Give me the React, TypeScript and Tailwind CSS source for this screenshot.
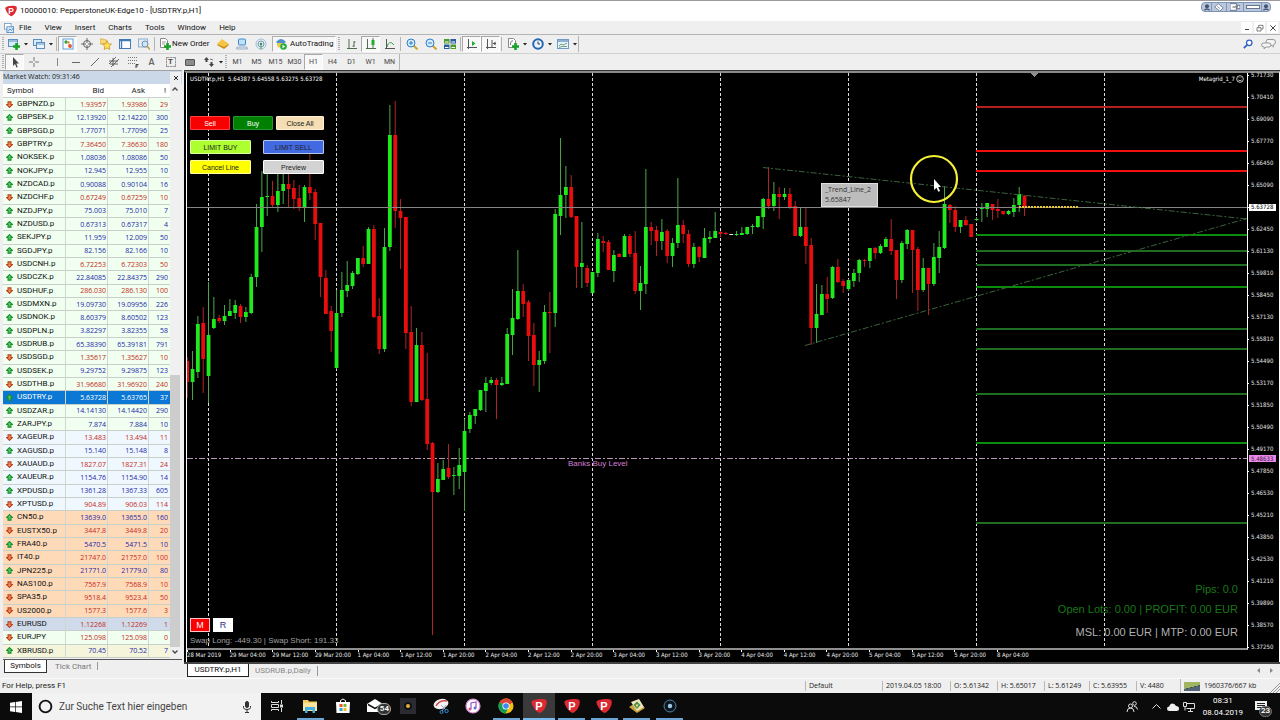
import React from 'react';

type Dir = 'up' | 'down';
type Quote = [symbol: string, dir: Dir, bid: string, ask: string, spread: string, tone: string];

const GREEN_ROW = 'bg-[#f0fff0]';
const BLUE_ROW = 'bg-[#f0f8ff]';
const PEACH_ROW = 'bg-[#ffdab9]';

const quotes: Quote[] = [
  ['GBPNZD.p', 'down', '1.93957', '1.93986', '29', GREEN_ROW],
  ['GBPSEK.p', 'up', '12.13920', '12.14220', '300', GREEN_ROW],
  ['GBPSGD.p', 'up', '1.77071', '1.77096', '25', GREEN_ROW],
  ['GBPTRY.p', 'down', '7.36450', '7.36630', '180', GREEN_ROW],
  ['NOKSEK.p', 'up', '1.08036', '1.08086', '50', GREEN_ROW],
  ['NOKJPY.p', 'up', '12.945', '12.955', '10', GREEN_ROW],
  ['NZDCAD.p', 'up', '0.90088', '0.90104', '16', GREEN_ROW],
  ['NZDCHF.p', 'down', '0.67249', '0.67259', '10', GREEN_ROW],
  ['NZDJPY.p', 'up', '75.003', '75.010', '7', GREEN_ROW],
  ['NZDUSD.p', 'up', '0.67313', '0.67317', '4', GREEN_ROW],
  ['SEKJPY.p', 'up', '11.959', '12.009', '50', GREEN_ROW],
  ['SGDJPY.p', 'up', '82.156', '82.166', '10', GREEN_ROW],
  ['USDCNH.p', 'down', '6.72253', '6.72303', '50', GREEN_ROW],
  ['USDCZK.p', 'up', '22.84085', '22.84375', '290', GREEN_ROW],
  ['USDHUF.p', 'down', '286.030', '286.130', '100', GREEN_ROW],
  ['USDMXN.p', 'up', '19.09730', '19.09956', '226', GREEN_ROW],
  ['USDNOK.p', 'up', '8.60379', '8.60502', '123', GREEN_ROW],
  ['USDPLN.p', 'up', '3.82297', '3.82355', '58', GREEN_ROW],
  ['USDRUB.p', 'up', '65.38390', '65.39181', '791', GREEN_ROW],
  ['USDSGD.p', 'down', '1.35617', '1.35627', '10', GREEN_ROW],
  ['USDSEK.p', 'up', '9.29752', '9.29875', '123', GREEN_ROW],
  ['USDTHB.p', 'down', '31.96680', '31.96920', '240', GREEN_ROW],
  ['USDTRY.p', 'up', '5.63728', '5.63765', '37', 'bg-[#0a78d4]'],
  ['USDZAR.p', 'up', '14.14130', '14.14420', '290', GREEN_ROW],
  ['ZARJPY.p', 'up', '7.874', '7.884', '10', GREEN_ROW],
  ['XAGEUR.p', 'down', '13.483', '13.494', '11', BLUE_ROW],
  ['XAGUSD.p', 'up', '15.140', '15.148', '8', BLUE_ROW],
  ['XAUAUD.p', 'down', '1827.07', '1827.31', '24', BLUE_ROW],
  ['XAUEUR.p', 'up', '1154.76', '1154.90', '14', BLUE_ROW],
  ['XPDUSD.p', 'up', '1361.28', '1367.33', '605', BLUE_ROW],
  ['XPTUSD.p', 'down', '904.89', '906.03', '114', BLUE_ROW],
  ['CN50.p', 'up', '13639.0', '13655.0', '160', PEACH_ROW],
  ['EUSTX50.p', 'down', '3447.8', '3449.8', '20', PEACH_ROW],
  ['FRA40.p', 'up', '5470.5', '5471.5', '10', PEACH_ROW],
  ['IT40.p', 'down', '21747.0', '21757.0', '100', PEACH_ROW],
  ['JPN225.p', 'up', '21771.0', '21779.0', '80', PEACH_ROW],
  ['NAS100.p', 'down', '7567.9', '7568.9', '10', PEACH_ROW],
  ['SPA35.p', 'down', '9518.4', '9523.4', '50', PEACH_ROW],
  ['US2000.p', 'down', '1577.3', '1577.6', '3', PEACH_ROW],
  ['EURUSD', 'down', '1.12268', '1.12269', '1', 'bg-[#cfdbea]'],
  ['EURJPY', 'down', '125.098', '125.098', '0', GREEN_ROW],
  ['XBRUSD.p', 'up', '70.45', '70.52', '7', 'bg-[#f5f5dc]'],
];

// One entry per hour: high, body top, body bottom, low, colour (g = up, r = down, w = flat)
type Candle = [number, number, number, number, string];
const candles: Candle[] = [
  [357, 361, 382, 398, 'r'], [351, 369, 382, 400, 'g'], [316, 324, 372, 378, 'g'], [307, 323, 359, 393, 'r'],
  [282, 335, 376, 403, 'g'], [297, 319, 328, 329, 'g'], [315, 318, 321, 323, 'r'], [305, 316, 321, 325, 'g'],
  [299, 311, 316, 316, 'g'], [300, 305, 313, 319, 'g'], [304, 306, 317, 323, 'r'], [307, 312, 317, 322, 'g'],
  [274, 277, 313, 314, 'g'], [204, 227, 277, 287, 'g'], [171, 197, 227, 252, 'g'], [174, 196, 197, 216, 'g'],
  [181, 196, 205, 207, 'r'], [173, 191, 205, 212, 'g'], [173, 184, 191, 204, 'g'], [173, 184, 189, 207, 'r'],
  [180, 188, 199, 209, 'r'], [185, 198, 208, 211, 'r'], [185, 187, 208, 222, 'g'], [153, 187, 193, 200, 'r'],
  [189, 192, 224, 240, 'r'], [223, 223, 277, 297, 'r'], [270, 278, 314, 314, 'r'], [306, 311, 331, 352, 'r'],
  [290, 313, 368, 369, 'g'], [272, 290, 313, 317, 'g'], [261, 285, 291, 297, 'g'], [271, 273, 286, 289, 'g'],
  [258, 258, 274, 275, 'g'], [246, 258, 264, 267, 'r'], [227, 229, 264, 264, 'g'], [225, 229, 317, 318, 'r'],
  [298, 316, 349, 354, 'r'], [228, 247, 349, 352, 'g'], [105, 135, 247, 251, 'g'], [101, 135, 211, 228, 'r'],
  [199, 211, 218, 269, 'r'], [217, 217, 333, 349, 'r'], [306, 332, 402, 406, 'r'], [328, 345, 402, 402, 'g'],
  [332, 345, 400, 401, 'r'], [353, 399, 444, 450, 'r'], [442, 443, 492, 635, 'r'], [463, 479, 492, 493, 'g'],
  [460, 469, 480, 480, 'g'], [444, 468, 477, 479, 'r'], [467, 475, 476, 495, 'g'], [448, 465, 476, 489, 'g'],
  [419, 431, 472, 511, 'g'], [412, 415, 429, 433, 'g'], [409, 409, 416, 424, 'g'], [390, 390, 410, 411, 'g'],
  [377, 383, 391, 412, 'g'], [377, 380, 383, 385, 'g'], [378, 380, 385, 419, 'r'], [377, 383, 385, 386, 'g'],
  [328, 334, 384, 384, 'g'], [289, 318, 335, 355, 'g'], [250, 291, 319, 320, 'g'], [284, 291, 304, 317, 'r'],
  [300, 302, 336, 361, 'r'], [323, 335, 365, 386, 'r'], [351, 360, 365, 392, 'g'], [305, 312, 361, 364, 'g'],
  [292, 312, 313, 353, 'r'], [209, 214, 313, 327, 'g'], [138, 195, 216, 235, 'g'], [166, 187, 195, 218, 'g'],
  [175, 187, 217, 218, 'r'], [216, 216, 267, 288, 'r'], [222, 263, 267, 288, 'g'], [265, 268, 283, 287, 'r'],
  [272, 272, 293, 293, 'g'], [233, 239, 273, 277, 'g'], [236, 241, 243, 252, 'r'], [240, 242, 270, 270, 'r'],
  [250, 255, 271, 282, 'g'], [253, 254, 257, 257, 'r'], [234, 236, 257, 257, 'g'], [234, 236, 254, 257, 'r'],
  [231, 253, 291, 294, 'r'], [266, 283, 291, 310, 'g'], [169, 227, 284, 294, 'g'], [222, 227, 231, 245, 'r'],
  [226, 230, 241, 256, 'r'], [219, 232, 241, 250, 'g'], [229, 231, 256, 263, 'r'], [238, 243, 256, 267, 'g'],
  [178, 225, 243, 248, 'g'], [220, 225, 234, 243, 'r'], [230, 234, 264, 267, 'r'], [243, 247, 264, 268, 'g'],
  [246, 247, 257, 262, 'r'], [228, 238, 258, 258, 'g'], [231, 237, 239, 243, 'g'], [212, 231, 238, 238, 'g'],
  [231, 232, 234, 237, 'r'], [232, 233, 234, 235, 'r'], [234, 234, 235, 235, 'w'], [231, 234, 235, 236, 'g'],
  [227, 233, 235, 235, 'g'], [227, 227, 234, 235, 'g'], [224, 226, 227, 234, 'g'], [216, 216, 227, 228, 'g'],
  [198, 199, 217, 229, 'g'], [167, 199, 206, 209, 'r'], [182, 194, 206, 211, 'g'], [187, 194, 197, 219, 'r'],
  [188, 194, 197, 200, 'g'], [188, 194, 207, 209, 'r'], [201, 206, 236, 236, 'r'], [207, 227, 236, 237, 'g'],
  [207, 227, 246, 264, 'r'], [238, 245, 328, 345, 'r'], [284, 314, 328, 343, 'g'], [285, 294, 315, 315, 'g'],
  [277, 294, 299, 313, 'r'], [266, 267, 298, 299, 'g'], [259, 267, 282, 283, 'r'], [279, 281, 286, 293, 'r'],
  [279, 280, 289, 291, 'g'], [269, 273, 281, 287, 'g'], [259, 260, 273, 282, 'g'], [259, 260, 261, 267, 'r'],
  [248, 248, 261, 268, 'g'], [247, 248, 253, 259, 'r'], [244, 246, 253, 254, 'g'], [237, 239, 247, 247, 'g'],
  [219, 239, 251, 255, 'r'], [250, 250, 280, 299, 'r'], [241, 243, 280, 283, 'g'], [229, 230, 244, 249, 'g'],
  [230, 230, 250, 293, 'r'], [247, 249, 290, 311, 'r'], [258, 268, 290, 292, 'g'], [268, 268, 284, 315, 'r'],
  [243, 257, 284, 286, 'g'], [231, 247, 258, 273, 'g'], [186, 204, 248, 249, 'g'], [204, 205, 210, 223, 'r'],
  [206, 210, 227, 232, 'r'], [220, 220, 227, 233, 'g'], [216, 220, 225, 226, 'r'], [224, 224, 237, 237, 'r'],
  [217, 219, 220, 221, 'g'], [203, 208, 209, 222, 'g'], [203, 203, 209, 217, 'g'], [204, 204, 210, 220, 'r'],
  [199, 209, 211, 218, 'r'], [211, 211, 214, 215, 'r'], [210, 211, 214, 215, 'g'], [198, 205, 212, 217, 'g'],
  [187, 194, 205, 212, 'g'], [195, 196, 207, 216, 'r'],
];

const bodyFill: Record<string, string> = { g: '#1eea1e', r: '#ea0d0d', w: '#e8e8e8' };
const wickFill: Record<string, string> = { g: '#4aa84a', r: '#b02626', w: '#e8e8e8' };

const LEFT = 187;
const STEP = 16 / 3;
const daySeparators = [208, 336, 464, 592, 720, 848, 976, 1104];
const stops: [number, string][] = [[107, '#b41e1e'], [151, '#f01010'], [171, '#f01010']];
const targets: [number, string][] = [
  [235, '#0c8c0c'], [251, '#1f6e1f'], [265, '#1f6e1f'], [287, '#0c8c0c'], [329, '#1f6e1f'],
  [349, '#1f6e1f'], [394, '#1f6e1f'], [443, '#0c8c0c'], [523, '#1f6e1f'],
];

const prices = [
  '5.71730', '5.70410', '5.69090', '5.67770', '5.66450', '5.65090', '5.63728', '5.62450', '5.61130',
  '5.59810', '5.58450', '5.57130', '5.55810', '5.54490', '5.53170', '5.51850', '5.50490', '5.49170',
  '5.47850', '5.46530', '5.45210', '5.43850', '5.42530', '5.41210', '5.39890', '5.38570', '5.37250',
];

const times = [
  '28 Mar 2019', '29 Mar 04:00', '29 Mar 12:00', '29 Mar 20:00', '1 Apr 04:00', '1 Apr 12:00', '1 Apr 20:00',
  '2 Apr 04:00', '2 Apr 12:00', '2 Apr 20:00', '3 Apr 04:00', '3 Apr 12:00', '3 Apr 20:00', '4 Apr 04:00',
  '4 Apr 12:00', '4 Apr 20:00', '5 Apr 04:00', '5 Apr 12:00', '5 Apr 20:00', '8 Apr 04:00',
];

/* ---------- small building blocks ---------- */

const Icon: React.FC<{ children: React.ReactNode; className?: string }> = ({ children, className }) => (
  <svg viewBox="0 0 12 12" className={className ?? 'size-3 shrink-0'} fill="none">
    {children}
  </svg>
);

const Tool: React.FC<{ label: string; on?: boolean; children: React.ReactNode }> = ({ label, on, children }) => (
  <button
    aria-label={label}
    className={
      on
        ? 'flex h-4 w-[19px] shrink-0 items-center justify-center border border-[#a8a8a8] border-r-white border-b-white bg-[#f8f8f8]'
        : 'flex h-4 w-[19px] shrink-0 items-center justify-center'
    }
  >
    {children}
  </button>
);

const Caret: React.FC<{ wide?: boolean }> = ({ wide }) => (
  <button aria-label="More" className={wide ? 'flex w-2 shrink-0 justify-center' : 'flex w-1.5 shrink-0 justify-center'}>
    <svg viewBox="0 0 4 3" className="h-[3px] w-1">
      <path d="M0 0h4L2 2.5z" fill="#222" />
    </svg>
  </button>
);

const Sep = () => <span className="mr-px ml-px h-[14px] w-px shrink-0 bg-[#b4b4b4]" />;

const Grip: React.FC<{ className: string }> = ({ className }) => (
  <span className={`${className} flex shrink-0 justify-center`}>
    <span className="h-[14px] w-[2px] bg-[repeating-linear-gradient(#b0b0b0_0_1px,#efefef_1px_2px)]" />
  </span>
);

const Pepper: React.FC<{ className: string }> = ({ className }) => (
  <svg viewBox="0 0 16 16" className={className}>
    <path d="M.6 3.600C1.600.900 13.500 0 15.200 2c1.600 2-.200 9.300-5.800 12.800C6.500 16.500-.400 6.800.600 3.600z" fill="#dc2a33" />
    <text x="8" y="11.500" textAnchor="middle" fontSize="11" fontWeight="bold" fill="#fff" fontFamily="Liberation Sans, sans-serif">
      P
    </text>
  </svg>
);

const Plus = () => <path d="M8.500 5v7M5 8.500h7" stroke="#17a325" strokeWidth="2.600" />;

/* ---------- window chrome ---------- */

const TitleBar = () => (
  <header className="flex h-[21px] items-center border-t border-[#9a9a9a] bg-white pr-[9px] pl-[5px]">
    <Pepper className="size-3" />
    <h1 className="ml-[3px] flex-1 text-[8px] text-[#111]">10000010: PepperstoneUK-Edge10 - [USDTRY.p,H1]</h1>
    <div className="mt-px flex h-2.5 self-start overflow-hidden rounded-sm border border-[#7d93b4] bg-[#b9c8de]">
      <button aria-label="Pin" className="flex w-2.5 items-center justify-center border-r border-[#8397b5]">
        <Icon className="size-2"><circle cx="6" cy="5" r="3" fill="#44556f" /><path d="M2 11q4-4 8 0" stroke="#44556f" strokeWidth="2" /></Icon>
      </button>
      <button aria-label="Rotate" className="flex w-[15px] items-center justify-center border-r border-[#8397b5]">
        <Icon className="size-2.5"><path d="M1 6l4-4 6 5-4 4z" fill="#fff" stroke="#66758c" /><path d="M4 5l3 3" stroke="#66758c" /></Icon>
      </button>
      <button aria-label="Move" className="flex w-[17px] items-center justify-center border-r border-[#8397b5]">
        <Icon className="size-2.5"><path d="M0 2h8v2h4v4H8v2H0z" fill="#fff" stroke="#55647a" /><path d="M3 6h6M7 4l2 2-2 2" stroke="#334" /></Icon>
      </button>
      <button aria-label="Resize" className="flex w-[18px] items-center justify-center border-r border-[#8397b5]">
        <span className="h-1 w-3.5 border border-[#66758c] bg-white" />
      </button>
      <button aria-label="Close overlay" className="flex w-2 items-center justify-center">
        <Icon className="size-2"><circle cx="6" cy="5" r="3" fill="#44556f" /><path d="M2 11q4-4 8 0" stroke="#44556f" strokeWidth="2" /></Icon>
      </button>
    </div>
  </header>
);

const MenuBar = () => (
  <nav className="flex h-[14px] items-center border-b border-[#b4b4b4] bg-[#efefef] pl-1 text-[8px] text-[#111]">
    <Icon className="mr-1 size-2.5 shrink-0">
      <rect x=".500" y=".500" width="8" height="7" fill="#fff" stroke="#6f9cc9" />
      <rect x="3.500" y="4.500" width="8" height="7" fill="#dcebf8" stroke="#4c86bf" />
      <path d="M5 10l2-3 2 2 2-3" stroke="#4c86bf" />
    </Icon>
    <div className="flex flex-1 gap-[13px] pl-px">
      {['File', 'View', 'Insert', 'Charts', 'Tools', 'Window', 'Help'].map((item) => (
        <button key={item}>{item}</button>
      ))}
    </div>
    <div className="flex gap-0.5 pr-0.5">
      <button aria-label="Minimize" className="flex h-[11px] w-[11px] items-center justify-center bg-white">
        <span className="mt-1 h-px w-1 bg-[#444]" />
      </button>
      <button aria-label="Restore" className="flex h-[11px] w-[11px] items-center justify-center bg-white">
        <Icon className="size-2"><path d="M1.500 5.500h6v5h-6zM4 5V2h6.500v5.500H8" stroke="#444" /></Icon>
      </button>
      <button aria-label="Close" className="flex h-[11px] w-[11px] items-center justify-center bg-white">
        <Icon className="size-2"><path d="M2 2l8 8M10 2l-8 8" stroke="#444" strokeWidth="1.500" /></Icon>
      </button>
    </div>
  </nav>
);

const MainToolbar = () => (
  <div className="flex h-[18px] items-center bg-[#efefef]">
    <Grip className="w-[5px]" />
    <button aria-label="New chart" className="flex w-[17px] shrink-0 justify-center">
      <Icon><rect x=".500" y="1.500" width="9" height="7" fill="#d7ebfa" stroke="#5a8fc0" /><path d="M1 3h8" stroke="#5a8fc0" /><Plus /></Icon>
    </button>
    <Caret wide />
    <button aria-label="Profiles" className="flex w-[17px] shrink-0 justify-center">
      <Icon><rect x=".500" y="1.500" width="8" height="6" fill="#d7ebfa" stroke="#5a8fc0" /><rect x="3.500" y="4.500" width="8" height="6" fill="#eaf4fc" stroke="#5a8fc0" /><path d="M4 6h7" stroke="#5a8fc0" /></Icon>
    </button>
    <Caret wide />
    <Sep />
    <Tool label="Market Watch" on>
      <Icon><rect x="1" y="1" width="10" height="10" fill="#fff" stroke="#5aa0dc" /><circle cx="4" cy="4" r="1.700" fill="#2da545" /><circle cx="8" cy="8" r="1.900" fill="#e0562a" /><circle cx="6.500" cy="4.500" r="1.200" fill="#e0862a" /></Icon>
    </Tool>
    <Tool label="Data Window">
      <Icon><circle cx="6" cy="6" r="3.500" stroke="#666" /><path d="M6 0v5M6 7v5M0 6h5M7 6h5" stroke="#666" /></Icon>
    </Tool>
    <Tool label="Navigator">
      <Icon><path d="M0 3V1h4l1 1h2v4H0z" fill="#f6d878" stroke="#c79a2c" strokeWidth=".600" /><path d="M7 3l1.300 2.800 3.200.300-2.300 2.200.600 3.200L7 10l-2.800 1.500.600-3.200-2.300-2.200 3.200-.300z" fill="#ffe15a" stroke="#c48a14" strokeWidth=".700" /></Icon>
    </Tool>
    <Tool label="Terminal">
      <Icon><rect x=".500" y="1.500" width="11" height="9" fill="#fff" stroke="#3f7cb8" /><path d="M.500 2.500h11M2.500 3v7" stroke="#3f7cb8" strokeWidth="1.400" /></Icon>
    </Tool>
    <Tool label="Strategy Tester">
      <Icon><rect x=".500" y="1" width="9" height="8" fill="#e3eef7" stroke="#8fb0cd" /><circle cx="7" cy="6" r="3" fill="#cfe6f8" stroke="#6f92b0" /><path d="M9 8l3 3.500" stroke="#caa040" strokeWidth="1.600" /></Icon>
    </Tool>
    <Sep />
    <button className="flex h-4 w-[57px] shrink-0 items-center gap-px pl-[3px] text-[8px] whitespace-nowrap text-[#111]">
      <Icon><path d="M1.500.500h5l2 2v7h-7z" fill="#fff" stroke="#888" /><path d="M3 4h4M3 6h3" stroke="#999" /><Plus /></Icon>
      New Order
    </button>
    <Tool label="MetaEditor">
      <Icon><path d="M0 7l5-5 7 5-5 4z" fill="#c98a12" /><path d="M0 6l5-5 7 5-5 3z" fill="#f5c445" /></Icon>
    </Tool>
    <Tool label="Virtual hosting">
      <Icon><rect x="2.500" y="1" width="7" height="6" rx="1" fill="#bfe0fa" stroke="#3f88cf" /><path d="M1 9h10l.500 2h-11z" fill="#dbe9f5" stroke="#7f9cb8" strokeWidth=".700" /></Icon>
    </Tool>
    <Tool label="Signals">
      <Icon><circle cx="6" cy="6" r="5" stroke="#9cbcd6" /><circle cx="6" cy="6" r="3" stroke="#6797be" /><circle cx="6" cy="6" r="1.300" fill="#2f8f4a" /><path d="M6 6v5.500" stroke="#4aa866" /></Icon>
    </Tool>
    <button className="ml-0.5 flex h-4 w-16 shrink-0 items-center gap-[3px] border border-[#b0b0b0] border-r-white border-b-white bg-[#f6f6f6] pl-[2px] text-[8px] text-[#111]">
      <Icon><path d="M1 4q5-6 10 0L8 6H3z" fill="#4b8fd0" /><path d="M2 5h6v4q-4 2-6-1z" fill="#f2c84c" /><circle cx="8.500" cy="8.500" r="3.300" fill="#27ae3b" /><path d="M7.500 6.800v3.400l2.700-1.700z" fill="#fff" /></Icon>
      AutoTrading
    </button>
    <Grip className="w-1.5" />
    <Tool label="Bar chart">
      <Icon><path d="M3 1v10M1 10.500h10M8 3v6M6.500 8H8M8 4h1.500" stroke="#4e6e4e" /></Icon>
    </Tool>
    <Tool label="Candlesticks" on>
      <Icon><path d="M2.500 1v10M1 10.500h10M8 0v10" stroke="#4e6e4e" /><rect x="6.500" y="2" width="3" height="5" fill="#1fae2b" /></Icon>
    </Tool>
    <Tool label="Line chart">
      <Icon><path d="M2.500 1v10M1 10.500h10" stroke="#555" /><path d="M3 9q2-8 7-2" stroke="#3fa050" /></Icon>
    </Tool>
    <Sep />
    <Tool label="Zoom in">
      <Icon><path d="M7.500 7.500l4 4" stroke="#d3a32a" strokeWidth="2" /><circle cx="5" cy="5" r="4" fill="#d5ebfb" stroke="#2f7fc6" /><path d="M5 3v4M3 5h4" stroke="#2f7fc6" /></Icon>
    </Tool>
    <Tool label="Zoom out">
      <Icon><path d="M7.500 7.500l4 4" stroke="#d3a32a" strokeWidth="2" /><circle cx="5" cy="5" r="4" fill="#d5ebfb" stroke="#2f7fc6" /><path d="M3 5h4" stroke="#2f7fc6" /></Icon>
    </Tool>
    <Tool label="Tile windows">
      <Icon><rect x="0" y="1" width="5.500" height="4.500" fill="#4a9a2c" /><rect x="6.500" y="1" width="5.500" height="4.500" fill="#2b5ea0" /><rect x="0" y="6.500" width="5.500" height="4.500" fill="#2b5ea0" /><rect x="6.500" y="6.500" width="5.500" height="4.500" fill="#4a9a2c" /><path d="M1 4h3.500M7.500 4H11M1 9.500h3.500M7.500 9.500H11" stroke="#fff" strokeWidth="1.200" /></Icon>
    </Tool>
    <Sep />
    <Tool label="Auto scroll" on>
      <Icon><path d="M2.500 1v10M1 9.500h10" stroke="#555" /><path d="M6 3v5l3.500-2.500z" fill="#1fae2b" /></Icon>
    </Tool>
    <Tool label="Chart shift" on>
      <Icon><path d="M2.500 1v10M1 9.500h10M7 2v7M8 5.500h3" stroke="#555" /><path d="M8 5.500l2.500-2v4z" fill="#555" /></Icon>
    </Tool>
    <Sep />
    <Tool label="Indicators">
      <Icon><path d="M1.500.500h5l2 2v7h-7z" fill="#fff" stroke="#888" /><path d="M3.500 7q0-5 2.500-4" stroke="#777" /><Plus /></Icon>
    </Tool>
    <Caret />
    <Tool label="Periods">
      <Icon><circle cx="6" cy="6" r="4.800" fill="#eaf4fc" stroke="#2466b0" strokeWidth="2" /><path d="M6 3.500V6h2" stroke="#334" /></Icon>
    </Tool>
    <Caret />
    <Tool label="Templates">
      <Icon><rect x=".500" y="1.500" width="11" height="9" fill="#eaf4fc" stroke="#6e9ac4" /><path d="M.500 3h11" stroke="#6e9ac4" strokeWidth="1.500" /><path d="M2 8l2-2 2 1 4-2M2 9.500l3-1 5 0" stroke="#4c8a5c" strokeWidth=".800" /></Icon>
    </Tool>
    <Caret />
    <span className="h-4 w-px bg-[#b4b4b4]" />
    <div className="ml-auto flex items-center gap-2 pr-1">
      <button aria-label="Search">
        <Icon className="size-2.5"><circle cx="7.500" cy="4.500" r="3.300" fill="#fff" stroke="#3362c4" strokeWidth="1.500" /><path d="M5 7l-4 4" stroke="#3362c4" strokeWidth="2.200" /></Icon>
      </button>
      <button aria-label="Chat">
        <svg viewBox="0 0 15 11" className="h-[11px] w-[15px]" fill="#f4f4f4" stroke="#999">
          <path d="M6 .500h6q2.500 0 2.500 2.500T12 6l.500 2L10 6H8Q5 6 5 3z" />
          <path d="M3 4h5q2 0 2 2T8 8H5L3 10l.300-2Q.500 8 .500 6T3 4z" />
        </svg>
      </button>
    </div>
  </div>
);

const DrawToolbar = () => (
  <div className="flex h-[17px] items-center border-t border-[#d0d0d0] bg-[#efefef]">
    <Grip className="w-[5px]" />
    <Tool label="Cursor" on>
      <Icon><path d="M4 1v9l2-2 1.500 3.500 1.200-.500L7.300 7.500H10z" fill="#444" /></Icon>
    </Tool>
    <Tool label="Crosshair">
      <Icon><path d="M6 1v4M6 7v4M1 6h4M7 6h4" stroke="#777" /></Icon>
    </Tool>
    <span className="w-1 shrink-0" />
    <Tool label="Vertical line"><Icon><path d="M6.500 2v8" stroke="#888" /></Icon></Tool>
    <Tool label="Horizontal line"><Icon><path d="M2 6.500h8" stroke="#666" /></Icon></Tool>
    <Tool label="Trendline"><Icon><path d="M2 10l8-8" stroke="#666" /></Icon></Tool>
    <Tool label="Channel">
      <Icon><path d="M1 8l7-7M3 11l8-8M1 5h9M2 8h8M5 2v8" stroke="#555" strokeWidth=".900" /></Icon>
    </Tool>
    <Tool label="Fibonacci">
      <Icon><path d="M1 1.500h10M1 4.500h10M1 7.500h7" stroke="#777" strokeDasharray="1 1" /><path d="M9 12V8.500h2.500M9 10h2" stroke="#444" /></Icon>
    </Tool>
    <Tool label="Text"><span className="text-[9px] leading-none font-semibold text-[#666]">A</span></Tool>
    <Tool label="Text label">
      <span className="flex h-2.5 w-2.5 items-center justify-center border border-dashed border-[#999] text-[8px] leading-none font-semibold text-[#444]">T</span>
    </Tool>
    <Tool label="Shapes"><span className="h-[7px] w-2.5 rounded-[1px] border border-[#555] bg-[#8c8c8c]" /></Tool>
    <Tool label="Arrows">
      <Icon><path d="M1 4l2.500-3L6 4H4.500v2H2.500V4z" fill="#444" /><path d="M6 8l2.500 3L11 8H9.500V6H7.500v2z" fill="#444" /><path d="M7 3l3 1" stroke="#777" /></Icon>
    </Tool>
    <Caret />
    <Grip className="w-1" />
    {['M1', 'M5', 'M15', 'M30', 'H1', 'H4', 'D1', 'W1', 'MN'].map((tf) => (
      <Tool key={tf} label={tf} on={tf === 'H1'}>
        <span className="text-[7px] leading-none text-[#444]">{tf}</span>
      </Tool>
    ))}
    <span className="h-4 w-px bg-[#b4b4b4]" />
  </div>
);

/* ---------- market watch ---------- */

const DirArrow: React.FC<{ dir: Dir }> = ({ dir }) => (
  <svg viewBox="0 0 8 8" className={dir === 'up' ? 'size-[7px] shrink-0' : 'size-[7px] shrink-0 rotate-180'}>
    <path
      d="M4 .700L7.300 4H5.700v3H2.300V4H.700z"
      fill={dir === 'up' ? '#4fcb62' : '#f28a58'}
      stroke={dir === 'up' ? '#1a8c2e' : '#b8401c'}
      strokeWidth="1.200"
    />
  </svg>
);

const COLS = 'grid grid-cols-[63px_42px_41px_21px]';

const MarketWatch = () => (
  <aside className="flex w-[182px] shrink-0 flex-col border-t border-[#a0a0a0] bg-[#efefef] pl-[3px]">
    <div className="flex h-[13px] items-center justify-between bg-[#cbd8e7] pr-px font-['Open_Sans',sans-serif] text-[7px] text-[#222]">
      <h2>Market Watch: 09:31:46</h2>
      <button aria-label="Close panel" className="flex h-3 w-[11px] items-center justify-center bg-[#efefef]">
        <Icon className="size-1.5"><path d="M2 2l8 8M10 2l-8 8" stroke="#222" strokeWidth="2" /></Icon>
      </button>
    </div>
    <div className="flex flex-1">
      <table className="flex flex-col bg-white leading-none">
        <thead className="block">
          <tr className={`${COLS} h-[14px] items-center border-b border-[#d0d0d0] text-[8px] text-[#222]`}>
            <th scope="col" className="pl-1 text-left font-normal">Symbol</th>
            <th scope="col" className="pr-1 text-right font-normal">Bid</th>
            <th scope="col" className="pr-1 text-right font-normal">Ask</th>
            <th scope="col" className="pr-1 text-right font-normal">!</th>
          </tr>
        </thead>
        <tbody className="grid flex-1 auto-rows-fr font-['Open_Sans',sans-serif] text-[7px]">
          {quotes.map(([symbol, dir, bid, ask, spread, tone]) => {
            const active = symbol === 'USDTRY.p';
            const ink = active ? 'text-white' : dir === 'up' ? 'text-[#1c28a8]' : 'text-[#c42a22]';
            return (
              <tr key={symbol} className={`${COLS} ${tone} items-stretch border-b border-[#c9cfc9]`}>
                <td className={`${active ? 'text-white' : 'text-[#111]'} flex items-center gap-1 border-r border-[#d0d6d0] pl-[3px] font-[Roboto,sans-serif] text-[8px]`}>
                  <DirArrow dir={dir} />
                  {symbol}
                </td>
                <td className={`${ink} flex items-center justify-end border-r border-[#d0d6d0] pr-px`}>{bid}</td>
                <td className={`${ink} flex items-center justify-end border-r border-[#d0d6d0] pr-px`}>{ask}</td>
                <td className={`${ink} flex items-center justify-end pr-[2px]`}>{spread}</td>
              </tr>
            );
          })}
        </tbody>
      </table>
      <div className="flex w-2.5 flex-col items-center bg-[#f0f0f0] pt-[2px] pb-[3px]">
        <Icon className="size-1.5"><path d="M1 9l5-5 5 5" stroke="#444" strokeWidth="2.500" /></Icon>
        <div className="flex w-full flex-1 flex-col pb-0.5">
          <div className="flex-[282]" />
          <div className="flex-[272] bg-[#cdcdcd]" />
        </div>
        <Icon className="size-1.5"><path d="M1 3l5 5 5-5" stroke="#444" strokeWidth="2.500" /></Icon>
      </div>
    </div>
    <div className="mt-px flex h-[15px] items-start border-t border-[#555] pl-px text-[8px] leading-none">
      <button className="h-[13px] w-[43px] border border-t-0 border-[#333] bg-white text-[#111]">Symbols</button>
      <button className="h-[13px] pl-2 text-[#777]">Tick Chart</button>
      <span className="mt-0.5 ml-1.5 h-2 w-px bg-[#999]" />
    </div>
    <div className="h-1" />
  </aside>
);

/* ---------- chart ---------- */

const Plot = () => (
  <svg viewBox="187 73 1060 575" preserveAspectRatio="none" className="block size-full" shapeRendering="crispEdges">
    {daySeparators.map((x) => (
      <line key={x} x1={x + 0.5} x2={x + 0.5} y1="73" y2="648" stroke="#dcdcdc" strokeDasharray="3 2" />
    ))}
    {[...stops, ...targets].map(([y, stroke]) => (
      <line key={y} x1="976" x2="1247" y1={y} y2={y} stroke={stroke} strokeWidth="2" />
    ))}
    <line x1="187" x2="1247" y1="458.500" y2="458.500" stroke="#b898b8" strokeDasharray="6 2 2 2" />
    <g shapeRendering="auto">
      {candles.map(([high, top, bottom, low, tone], i) => {
        const x = LEFT + 0.2 + i * STEP;
        return (
          <g key={i}>
            <rect x={x - 0.5} y={high} width="1" height={low - high} fill={wickFill[tone]} />
            <rect x={x - 1.9} y={top} width="3.800" height={bottom - top} fill={bodyFill[tone]} />
          </g>
        );
      })}
    </g>
    <line x1="187" x2="1247" y1="207.500" y2="207.500" stroke="#858585" />
    <line x1="1019" x2="1078" y1="207" y2="207" stroke="#e8c53a" strokeWidth="2" strokeDasharray="2 1" />
    <g stroke="#3b633b" strokeDasharray="6 2 2 2" shapeRendering="auto">
      <line x1="763" y1="167.500" x2="1247" y2="219" />
      <line x1="805" y1="345.500" x2="1247" y2="218.500" />
    </g>
    <path d="M1030 73h8l-4 4z" fill="#909090" />
  </svg>
);

const TradePanel = () => (
  <div className="absolute top-[43px] left-[3px] flex w-[134px] flex-col text-[7px] leading-none text-[#222]">
    <div className="flex gap-[3px]">
      <button className="h-[14px] w-10 rounded-[1px] border border-[#ff4040] bg-[#f80000] text-white">Sell</button>
      <button className="h-[14px] w-10 rounded-[1px] border border-[#2d932d] bg-[#008000] text-white">Buy</button>
      <button className="h-[14px] flex-1 rounded-[1px] border border-[#fff0d4] bg-[#f5deb3]">Close All</button>
    </div>
    <div className="mt-2.5 flex justify-between">
      <button className="h-[14px] w-[61px] rounded-[1px] border border-[#d8ffa0] bg-[#adff2f]">LIMIT BUY</button>
      <button className="h-[14px] w-[61px] rounded-[1px] border border-[#b8c4e8] bg-[#4169e1]">LIMIT SELL</button>
    </div>
    <div className="mt-1.5 flex justify-between">
      <button className="h-[14px] w-[61px] rounded-[1px] border border-[#ffffa0] bg-[#ffff00]">Cancel Line</button>
      <button className="h-[14px] w-[61px] rounded-[1px] border border-white bg-[#d3d3d3]">Preview</button>
    </div>
  </div>
);

const Chart = () => (
  <section className="ml-0.5 flex min-w-0 flex-1 flex-col border-t border-[#333]">
    <div className="flex flex-1 flex-col border-t-2 border-r border-l-2 border-t-[#8a8a86] border-r-white border-l-black bg-black font-['DejaVu_Sans_Condensed','DejaVu_Sans',sans-serif]">
      <div className="flex flex-1 border-l border-white">
        <div className="relative flex-1 border-r border-b-2 border-r-white border-b-[#8f8f8f] font-['Liberation_Sans',sans-serif]">
          <div className="absolute inset-0">
            <Plot />
          </div>
          <p className="absolute top-[2px] left-[3px] font-['DejaVu_Sans_Condensed','DejaVu_Sans',sans-serif] text-[6px] leading-[8px] whitespace-pre text-white">
            USDTRY.p,H1  5.64387 5.64558 5.63275 5.63728
          </p>
          <p className="absolute top-[2px] right-[3px] flex items-center gap-px font-['DejaVu_Sans_Condensed','DejaVu_Sans',sans-serif] text-[6px] leading-[8px] text-white">
            Metagrid_1_7
            <Icon className="size-2">
              <circle cx="6" cy="6" r="5" stroke="#ddd" strokeWidth="1.300" />
              <path d="M3.500 7.500q2.500 2.500 5 0M4 4h1M7 4h1" stroke="#ddd" strokeWidth="1.300" />
            </Icon>
          </p>
          <TradePanel />
          <div className="absolute top-[110px] left-[634px] flex h-6 w-[57px] flex-col justify-center border border-[#e0e0e0] bg-[#c6c6c6]/95 pl-[3px] font-['Open_Sans',sans-serif] text-[7px] leading-[10px] text-[#333]">
            <span>_Trend_Line_2</span>
            <span>5.65847</span>
          </div>
          <svg viewBox="0 0 50 50" className="absolute top-[81px] left-[722px] size-[50px]">
            <circle cx="25" cy="25" r="23" fill="none" stroke="#f4f036" strokeWidth="2.200" />
            <path d="M25 25v11l2.500-2.300 1.800 4 1.700-.800-1.800-3.900H32z" fill="#fff" />
          </svg>
          <p className="absolute top-[386px] left-[381px] text-[8px] leading-[10px] text-[#d67fd6]">Banks Buy Level</p>
          <div className="absolute bottom-[2px] left-[3px] flex flex-col gap-1">
            <div className="flex gap-[3px]">
              <button className="h-[14px] w-5 border border-[#ffc8c8] bg-[#fb0000] text-[9px] leading-none text-white">M</button>
              <button className="h-[14px] w-5 border border-white bg-white text-[9px] leading-none text-[#2b2b90]">R</button>
            </div>
            <p className="text-[8px] leading-[10px] text-[#a0a0a0]">Swap Long: -449.30 | Swap Short: 191.33</p>
          </div>
          <div className="absolute right-[9px] bottom-[8px] flex flex-col text-right text-[11px] leading-4 text-[#187818]">
            <p>Pips: 0.0</p>
            <p className="mt-1">Open Lots: 0.00 | PROFIT: 0.00 EUR</p>
            <p className="mt-[7px] text-[#b0b0b0]">MSL: 0.00 EUR | MTP: 0.00 EUR</p>
          </div>
        </div>
        <div className="relative flex w-[31px] flex-col justify-between text-[6px] leading-none text-[#e4e4e4]">
          <ul className="-mt-[9px] -mb-2 flex flex-1 flex-col">
            {prices.map((price) => (
              <li key={price} className="flex flex-1 items-center">
                <span className="mr-0.5 h-px w-px bg-white" />
                {price === '5.63728' ? (
                  <span className="-ml-0.5 flex h-[7px] w-[27px] items-center bg-white pl-[2px] text-black">{price}</span>
                ) : (
                  price
                )}
              </li>
            ))}
          </ul>
          <span className="absolute top-[382px] left-px flex h-[7px] w-[27px] items-center bg-[#e888e8] pl-[2px] text-[#402040]">5.48633</span>
        </div>
      </div>
      <ol className="grid h-3 auto-cols-[minmax(0,3.904%)] grid-flow-col border-l border-white text-[6px] leading-none whitespace-nowrap text-[#ececec]">
        {times.map((t) => (
          <li key={t}>
            <span className="block h-[2px] w-px bg-white" />
            {t}
          </li>
        ))}
      </ol>
    </div>
    <div className="flex h-4 items-start border-t-2 border-[#444] bg-[#efefef] pl-[3px] text-[8px] leading-none">
      <button className="h-[13px] w-[62px] border border-t-0 border-[#222] bg-white text-[#111]">USDTRY.p,H1</button>
      <button className="h-[13px] pl-1.5 text-[#888]">USDRUB.p,Daily</button>
      <span className="mt-0.5 ml-1.5 h-2.5 w-px bg-[#999]" />
      <div className="mt-1 mr-[7px] ml-auto flex gap-2.5">
        <button aria-label="Scroll tabs left"><svg viewBox="0 0 3 5" className="h-[5px] w-[3px]"><path d="M3 0v5L0 2.500z" fill="#888" /></svg></button>
        <button aria-label="Scroll tabs right"><svg viewBox="0 0 3 5" className="h-[5px] w-[3px]"><path d="M0 0v5l3-2.500z" fill="#888" /></svg></button>
      </div>
    </div>
  </section>
);

/* ---------- status bar and taskbar ---------- */

const StatusBar = () => (
  <footer className="flex h-[15px] items-center border-t border-[#fafafa] bg-[#efefef] pl-0.5 font-['Open_Sans',sans-serif] text-[7px] text-[#222]">
    <span className="flex-1 font-[Roboto,sans-serif] text-[8px]">For Help, press F1</span>
    <span className="w-[77px] border-l border-[#b8b8b8] pl-[3px]">Default</span>
    <span className="w-[68px] border-l border-[#b8b8b8] pl-[3px]">2019.04.05 18:00</span>
    <span className="w-[47px] border-l border-[#b8b8b8] pl-[3px]">O: 5.61342</span>
    <span className="w-[47px] border-l border-[#b8b8b8] pl-[3px]">H: 5.65017</span>
    <span className="w-[45px] border-l border-[#b8b8b8] pl-[3px]">L: 5.61249</span>
    <span className="w-[47px] border-l border-[#b8b8b8] pl-[3px]">C: 5.63955</span>
    <span className="w-[44px] border-l border-[#b8b8b8] pl-[3px]">V: 4480</span>
    <span className="flex w-[100px] items-center gap-1 border-l border-[#b8b8b8] pl-[3px]">
      <svg viewBox="0 0 16 9" className="h-[9px] w-4">
        <path d="M1 0v7M3 0v7M5 0v6M7 0v6M9 0v5M11 0v5M13 0v4M15 0v4" stroke="#7f9c26" strokeWidth="1.400" />
        <path d="M1 9V7M3 9V6M5 9V6M7 9V5M9 9V5M11 9V4M13 9V4M15 9V3" stroke="#122a44" strokeWidth="1.400" />
      </svg>
      <span className="whitespace-nowrap">1960376/667 kb</span>
      <svg viewBox="0 0 10 10" className="mt-1 ml-auto size-2.5"><path d="M0 10L10 0M3 10l7-7M6 10l4-4" stroke="#999" /></svg>
    </span>
  </footer>
);

const apps: { name: string; running?: boolean; active?: boolean; icon: React.ReactNode }[] = [
  {
    name: 'Task View',
    icon: (
      <svg viewBox="0 0 12 12" className="size-3" fill="none" stroke="#ddd">
        <path d="M.500 1v1.500h7V1M.500 11V9.500h7V11M.500 4.500h7v3h-7zM10.500 0v4M10.500 8v4" />
        <rect x="9.500" y="5" width="2" height="2" fill="#ddd" />
      </svg>
    ),
  },
  {
    name: 'File Explorer',
    running: true,
    icon: (
      <svg viewBox="0 0 16 14" className="h-3.5 w-4">
        <path d="M1 1h5l1 1.500h8V12H1z" fill="#f3cf62" />
        <path d="M1 4h14v8H1z" fill="#fbe59a" />
        <path d="M3 14V8h10v6h-2.500v-3h-5v3z" fill="#45b0e6" />
      </svg>
    ),
  },
  {
    name: 'Store',
    icon: (
      <svg viewBox="0 0 16 16" className="size-4">
        <path d="M5.500 4V2.500q2.500-3 5 0V4" stroke="#fff" fill="none" />
        <path d="M1 4h14l-.500 11h-13z" fill="#fff" />
        <path d="M4.500 6h3v3h-3z" fill="#e8502a" />
        <path d="M8.500 6h3v3h-3z" fill="#7cb82f" />
        <path d="M4.500 10h3v3h-3z" fill="#2a9fe0" />
        <path d="M8.500 10h3v3h-3z" fill="#f5b81e" />
      </svg>
    ),
  },
  {
    name: 'Mail',
    icon: (
      <span className="relative">
        <svg viewBox="0 0 16 13" className="h-[13px] w-4">
          <path d="M0 5l8-5 8 5v8H0z" fill="#fff" />
          <path d="M1 5.500l7 4 7-4" stroke="#111" fill="none" strokeWidth="1.500" />
        </svg>
        <span className="absolute top-1 left-2.5 flex h-3 w-3.5 items-center justify-center rounded-full border border-[#aaa] bg-[#333] text-[8px] font-semibold text-white">54</span>
      </span>
    ),
  },
  {
    name: 'Recorder',
    icon: (
      <svg viewBox="0 0 16 16" className="size-4">
        <path d="M0 0h16v16H0z" fill="#2b2c33" />
        <circle cx="8" cy="8" r="4" fill="#111" />
        <circle cx="8" cy="8" r="2" fill="#e0b040" />
      </svg>
    ),
  },
  {
    name: 'Snipping Tool',
    icon: (
      <svg viewBox="0 0 16 16" className="size-4">
        <ellipse cx="8" cy="6" rx="7.500" ry="5" fill="#f2f2f2" transform="rotate(-15 8 6)" />
        <path d="M3 8q3-6 11-5" stroke="#d04848" strokeWidth="1.500" fill="none" />
        <path d="M8 7l5 5M13 7l-4 6" stroke="#9ab" />
        <circle cx="13.500" cy="13" r="1.700" stroke="#2f8fd6" fill="none" />
        <circle cx="8.500" cy="14" r="1.500" stroke="#2f8fd6" fill="none" />
      </svg>
    ),
  },
  {
    name: 'iTunes',
    icon: (
      <svg viewBox="0 0 16 16" className="size-4">
        <circle cx="8" cy="8" r="7" fill="#fff" stroke="#d88ad8" strokeWidth="1.200" />
        <path d="M6 11V5l5-1v6" stroke="#9a50c8" strokeWidth="1.200" fill="none" />
        <circle cx="5" cy="11" r="1.500" fill="#e0508c" />
        <circle cx="10" cy="10" r="1.500" fill="#5a70e0" />
      </svg>
    ),
  },
  {
    name: 'Chrome',
    running: true,
    icon: (
      <svg viewBox="0 0 16 16" className="size-4">
        <circle cx="8" cy="8" r="7.500" fill="#f4c20d" />
        <path d="M8 8L1.500 4.200A7.500 7.500 0 0 1 14.500 4.300z" fill="#db4437" />
        <path d="M8 8L1.500 4.200A7.500 7.500 0 0 0 7.500 15.500L10.500 10z" fill="#0f9d58" />
        <path d="M8 4.300h6.500L12 6z" fill="#db4437" />
        <circle cx="8" cy="8" r="3.600" fill="#fff" />
        <circle cx="8" cy="8" r="2.800" fill="#4285f4" />
      </svg>
    ),
  },
  { name: 'Pepperstone Edge10', running: true, active: true, icon: <Pepper className="size-4" /> },
  { name: 'Pepperstone 2', running: true, icon: <Pepper className="size-4" /> },
  { name: 'Pepperstone 3', running: true, icon: <Pepper className="size-4" /> },
  {
    name: 'MetaEditor',
    running: true,
    icon: (
      <svg viewBox="0 0 16 16" className="size-4">
        <path d="M0 9l8 6 8-5-8-6z" fill="#c9a33a" />
        <path d="M2 4l8-3 5 8-7 4z" fill="#efe6b8" />
        <path d="M8 3.500l3.500 3.500L8 11 4.500 7z" fill="#3f8a4e" />
        <path d="M6.500 6.500h3L8 9.500z" fill="#f3e27a" />
      </svg>
    ),
  },
  {
    name: 'Capture',
    running: true,
    icon: (
      <svg viewBox="0 0 16 16" className="size-4">
        <circle cx="8" cy="8" r="6" stroke="#4a83a8" fill="#0d1720" />
        <circle cx="8" cy="8" r="2.200" fill="#9cc8e6" />
      </svg>
    ),
  },
];

const Taskbar = () => (
  <div className="flex h-[27px] items-stretch bg-[#0b0b0b] text-white">
    <button aria-label="Start" className="flex w-8 items-center justify-center">
      <svg viewBox="0 0 12 12" className="size-3"><path d="M0 1.700L5 1v4.600H0zM5.700.900L12 0v5.600H5.700zM0 6.300h5V11l-5-.700zM5.700 6.300H12V12l-6.300-.900z" fill="#fff" /></svg>
    </button>
    <label className="flex w-[229px] items-center gap-1.5 bg-[#f2f2f2] px-1.5">
      <svg viewBox="0 0 16 16" className="size-[15px] shrink-0"><circle cx="8" cy="8" r="6.300" fill="none" stroke="#111" strokeWidth="2" /></svg>
      <input
        aria-label="Suche"
        placeholder="Zur Suche Text hier eingeben"
        className="min-w-0 flex-1 bg-transparent font-[Roboto,sans-serif] text-[10px] outline-none placeholder:text-[#444]"
      />
      <svg viewBox="0 0 8 12" className="mr-1 h-3 w-2" fill="none" stroke="#333">
        <rect x="2.500" y=".500" width="3" height="6" rx="1.500" fill="#333" />
        <path d="M.500 5v1.500q0 2 3.500 2t3.500-2V5M4 8.500v3M2 11.500h4" />
      </svg>
    </label>
    <div className="grid w-[425px] grid-cols-13">
      {apps.map(({ name, running, active, icon }) => (
        <button
          key={name}
          aria-label={name}
          className={active ? 'flex flex-col items-center bg-[#3a3a3a]' : 'flex flex-col items-center'}
        >
          <span className="flex flex-1 items-center">{icon}</span>
          <span className={running ? (active ? 'h-0.5 w-full bg-[#76b9ed]' : 'h-0.5 w-[27px] bg-[#6aa5d6]') : 'h-0.5'} />
        </button>
      ))}
    </div>
    <div className="ml-auto flex items-center pr-2">
      <button aria-label="People" className="mr-3.5">
        <Icon><circle cx="4.500" cy="5" r="2" stroke="#ddd" /><path d="M1 11q0-4 3.500-4T8 11" stroke="#ddd" /><circle cx="8.500" cy="2.500" r="1.800" stroke="#ddd" /><path d="M8 5.500q3-.500 3.500 3" stroke="#ddd" /></Icon>
      </button>
      <button aria-label="Hidden icons" className="mr-1.5">
        <svg viewBox="0 0 9 5" className="h-[5px] w-[9px]"><path d="M.500 4.500l4-4 4 4" stroke="#ddd" fill="none" /></svg>
      </button>
      <svg viewBox="0 0 12 8" className="mr-1 h-2 w-3"><path d="M2.500 8Q0 8 0 5.800t2.300-2.200Q3 .500 5.500.500T9 3q3 0 3 2.500T9.500 8z" fill="#f0f0f0" /></svg>
      <svg viewBox="0 0 12 10" className="mr-2 h-2.5 w-3" fill="none" stroke="#ddd"><path d="M3.500 1.500h8v5h-8M7.500 7v2M5 9.500h5M.500.500h3v4h-3zM2 4.500v4" /></svg>
      <time className="mr-3 flex flex-col text-center text-[8px] leading-3">
        <span>08:31</span>
        <span>08.04.2019</span>
      </time>
      <button aria-label="Notifications" className="relative w-[17px]">
        <svg viewBox="0 0 12 12" className="size-3"><path d="M0 0h12v9H8v3L5 9H0z" fill="#f0f0f0" /><path d="M2 2.500h8M2 4.500h8M2 6.500h5" stroke="#222" /></svg>
        <span className="absolute top-[5px] left-1 flex h-[11px] w-[13px] items-center justify-center rounded-full border border-[#777] bg-[#333] text-[8px] leading-none font-semibold">23</span>
      </button>
    </div>
  </div>
);

const App: React.FC = () => (
  <div className="flex min-h-screen flex-col bg-[#efefef] font-[Roboto,'Open_Sans',sans-serif]">
    <TitleBar />
    <MenuBar />
    <MainToolbar />
    <DrawToolbar />
    <main className="flex flex-1">
      <MarketWatch />
      <Chart />
    </main>
    <StatusBar />
    <Taskbar />
  </div>
);

export default App;
